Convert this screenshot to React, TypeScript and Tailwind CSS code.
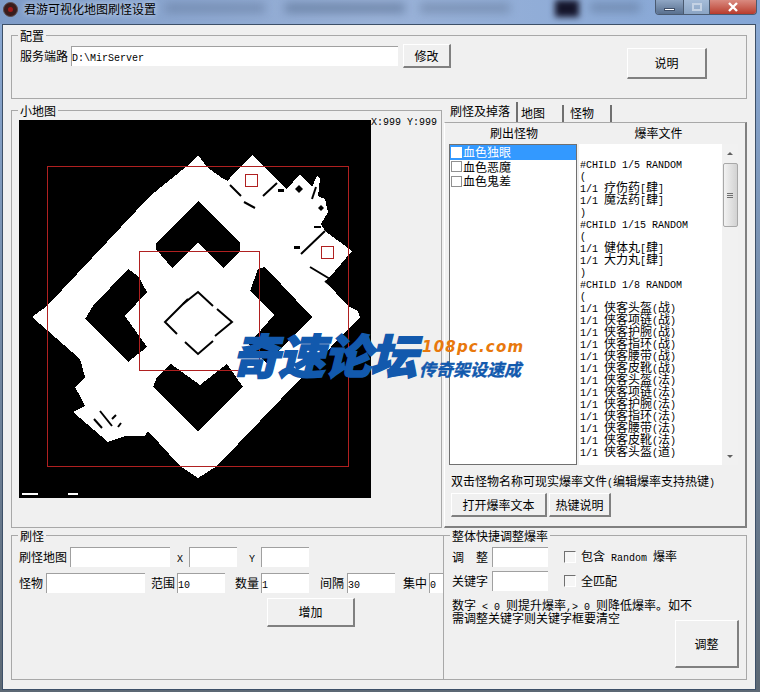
const cjk = "font-['Noto_Sans_CJK_SC','Liberation_Sans',sans-serif]";

// ascii runs are 6px wide like the bitmap font, cjk runs 12px
function T({ s }: { s: string }) {
  const parts = s.match(/[\x20-\x7e]+|[^\x20-\x7e]+/g) || [];
  return (
    <>
      {parts.map((p, i) =>
        /^[\x20-\x7e]/.test(p) ? (
          <span key={i} className="font-['Liberation_Mono',monospace] text-[10px] whitespace-pre">
            {p}
          </span>
        ) : (
          <span key={i} className="font-['Noto_Sans_CJK_SC',sans-serif] text-[12px]">
            {p}
          </span>
        )
      )}
    </>
  );
}

const Field = ({ value, className }: { value?: string; className: string }) => (
  <div
    className={`h-[20px] shrink-0 bg-white border-t border-l border-t-[#a0a0a0] border-l-[#a0a0a0] leading-[18px] whitespace-pre overflow-hidden ${className}`}
  >
    {value && <T s={value} />}
  </div>
);

const Btn = ({ label, className }: { label: string; className: string }) => (
  <div
    className={`shrink-0 flex items-center justify-center bg-[#f0f0f0] border-t border-l border-t-white border-l-white border-r-2 border-b-2 border-r-[#808080] border-b-[#808080] leading-none ${className}`}
  >
    <T s={label} />
  </div>
);

const Label = ({ s, className = '' }: { s: string; className?: string }) => (
  <div className={`shrink-0 leading-[20px] whitespace-pre ${className}`}>
    <T s={s} />
  </div>
);

const Group = ({ title, className, children }: { title: string; className: string; children: React.ReactNode }) => (
  <div className={`relative border border-[#a8a8a8] ${className}`}>
    <div className="absolute -top-[7px] left-[6px] h-[14px] px-[2px] bg-[#f0f0f0] leading-[14px]">
      <T s={title} />
    </div>
    {children}
  </div>
);

const Check = () => (
  <div className="w-[12px] h-[12px] shrink-0 bg-[#f6f6f6] border-t border-l border-t-[#707070] border-l-[#707070] border-r border-b border-r-white border-b-white" />
);

const monsters = ['血色独眼', '血色恶魔', '血色鬼差'];
const slots = ['头盔', '项链', '护腕', '指环', '腰带', '皮靴'];
const rates = [
  ' ',
  '#CHILD 1/5 RANDOM',
  '(',
  '1/1 疗伤药[肆]',
  '1/1 魔法药[肆]',
  ')',
  '#CHILD 1/15 RANDOM',
  '(',
  '1/1 健体丸[肆]',
  '1/1 大力丸[肆]',
  ')',
  '#CHILD 1/8 RANDOM',
  '(',
  ...slots.map((n) => `1/1 侠客${n}(战)`),
  ...slots.map((n) => `1/1 侠客${n}(法)`),
  '1/1 侠客头盔(道)',
];

const MiniMap = () => (
  <svg viewBox="19 121 352 378" className="w-[352px] h-[378px] shrink-0 bg-black block">
    <g shapeRendering="crispEdges">
      <polygon
        fill="#fff"
        points="198,156 207,168 222,179 228,182 232,176 252,156 278,182 287,190 300,175 312,188 317,177 320,180 318,197 325,200 328,213 321,225 325,232 352,252 330,278 325,282 348,307 358,312 360,318 303,377 217,467 198,479 180,467 148,432 145,437 125,437 108,443 73,413 85,407 80,397 75,388 85,378 80,360 32,318 47,307 107,243 150,197 187,167"
      />
      <polygon fill="#000" points="198,202 240,244 240,252 223,269 198,244 172,269 156,250 156,244" />
      <polygon fill="#000" points="265,268 312,318 266,364 249,345 274,316 250,292 258,270" />
      <polygon fill="#000" points="128,270 138,277 147,293 125,317 147,348 128,363 85,320 93,307" />
      <polygon fill="#000" points="171,365 157,378 153,388 198,432 243,388 227,365 200,386" />
    </g>
    <g fill="none" stroke="#000" strokeWidth="2">
      <path d="M183 305 198 293 213 307" />
      <path d="M188 300 165 323 177 335" />
      <path d="M217 310 232 323 215 337" />
      <path d="M185 343 198 355 213 342" />
      <path d="M230 186 241 197M244 203 255 209M263 197 277 184" />
      <path d="M301 255 325 232M310 268 330 280M325 282 335 290" />
      <path d="M94 420 102 429M100 412 112 427M112 420 116 416M118 428 121 424" />
      <path d="M312 200 316 188" />
    </g>
    <g fill="#000">
      <polygon points="299,186 303,190 299,194 295,190" />
      <polygon points="321,206 324,209 321,212 318,209" />
      <rect x="278" y="190" width="6" height="3" />
      <rect x="294" y="247" width="6" height="3" />
      <rect x="314" y="227" width="7" height="2" />
    </g>
    <g fill="none" stroke="#b02020" shapeRendering="crispEdges">
      <rect x="47.5" y="167.5" width="301" height="300" />
      <rect x="139.5" y="252.5" width="120" height="119" />
      <rect x="245.5" y="175.5" width="12" height="12" />
      <rect x="321.5" y="247.5" width="12" height="12" />
    </g>
    <rect x="22" y="494" width="16" height="2" fill="#fff" />
    <rect x="68" y="494" width="10" height="2" fill="#fff" />
  </svg>
);

const Scrollbar = () => (
  <div className="w-[16px] shrink-0 flex flex-col items-center bg-[#f1f1f1]">
    <div className="h-[19px] w-full flex items-center justify-center">
      <div className="w-0 h-0 border-x-[3px] border-x-transparent border-b-[3px] border-b-[#606060]" />
    </div>
    <div className="w-[15px] h-[64px] rounded-[2px] border border-[#a8a8a8] bg-gradient-to-r from-[#f2f2f2] to-[#d2d2d2] flex flex-col items-center justify-center gap-[1px]">
      <div className="w-[6px] h-[1px] bg-[#707070]" />
      <div className="w-[6px] h-[1px] bg-[#707070]" />
      <div className="w-[6px] h-[1px] bg-[#707070]" />
    </div>
    <div className="flex-1" />
    <div className="h-[18px] w-full flex items-center justify-center">
      <div className="w-0 h-0 border-x-[3px] border-x-transparent border-t-[3px] border-t-[#606060]" />
    </div>
  </div>
);

const DropPanel = () => (
  <div className="flex-1 flex flex-col">
    {/* tabs */}
    <div className="h-[18px] flex items-end pl-[3px] -mt-[18px]">
      <div className="w-[71px] h-[20px] bg-[#f0f0f0] border-r-2 border-r-[#707070] pl-[3px] leading-[18px] relative z-10">
        <T s="刷怪及掉落" />
      </div>
      <div className="w-[46px] h-[17px] border-r-2 border-r-[#707070] pl-[3px] leading-[16px]">
        <T s="地图" />
      </div>
      <div className="w-[48px] h-[17px] border-r-2 border-r-[#707070] pl-[6px] leading-[16px]">
        <T s="怪物" />
      </div>
    </div>
    <div className="flex-1 border-t border-l border-t-[#a8a8a8] border-l-white border-r-2 border-b-2 border-r-[#808080] border-b-[#808080] pl-[4px] flex flex-col">
      <div className="h-[21px] flex leading-[20px]">
        <div className="w-[130px] text-center">
          <T s="刷出怪物" />
        </div>
        <div className="w-[159px] text-center">
          <T s="爆率文件" />
        </div>
      </div>
      <div className="h-[321px] flex gap-[2px]">
        <div className="w-[128px] bg-white border border-[#707070]">
          {monsters.map((m, i) => (
            <div
              key={m}
              className={`h-[14.5px] flex items-center gap-[1px] pl-[1px] leading-none ${i === 0 ? 'bg-[#3399ff] text-white' : ''}`}
            >
              <div className={`w-[11px] h-[11px] border ${i === 0 ? 'bg-white border-white' : 'border-[#909090]'}`} />
              <T s={m} />
            </div>
          ))}
        </div>
        <div className="w-[159px] bg-white flex">
          <div className="flex-1 pl-[1px] pt-[1px] overflow-hidden">
            {rates.map((line, i) => (
              <div key={i} className="h-[12px] leading-[12px] whitespace-pre">
                <T s={line} />
              </div>
            ))}
          </div>
          <Scrollbar />
        </div>
      </div>
      <div className="mt-[9px] pl-[2px] h-[14px] leading-[14px] whitespace-pre">
        <T s="双击怪物名称可现实爆率文件(编辑爆率支持热键)" />
      </div>
      <div className="mt-[5px] pl-[2px] flex gap-[2px]">
        <Btn label="打开爆率文本" className="w-[96px] h-[24px]" />
        <Btn label="热键说明" className="w-[62px] h-[24px]" />
      </div>
    </div>
  </div>
);

export default function App() {
  return (
    <div className={`relative w-[760px] h-[692px] overflow-hidden bg-[#8aa9d4] text-black text-[12px] ${cjk}`}>
      {/* blurred desktop behind the title bar */}
      <div className="absolute inset-x-0 top-0 h-[25px] bg-gradient-to-r from-[#7f9cc8] via-[#9ab2d8] to-[#84a6d6]" />
      <div className="absolute left-[165px] top-[3px] w-[100px] h-[10px] bg-[#6d84a8] blur-[5px] opacity-70" />
      <div className="absolute left-[285px] top-[3px] w-[120px] h-[10px] bg-[#5f7698] blur-[5px] opacity-70" />
      <div className="absolute left-[420px] top-[3px] w-[90px] h-[10px] bg-[#6a7f9f] blur-[5px] opacity-60" />
      <div className="absolute left-[555px] top-0 w-[24px] h-[17px] bg-[#14142a] blur-[3px]" />
      <div className="absolute left-[590px] top-[3px] w-[50px] h-[9px] bg-[#5f7698] blur-[5px] opacity-60" />

      <div className="relative h-[692px] flex flex-col">
        {/* title bar */}
        <div className="h-[24px] shrink-0 flex items-start">
          <div className="mt-[2px] ml-[3px] w-[15px] h-[15px] rounded-full bg-[#3a1c1c] border border-[#5a4a4a] flex items-center justify-center">
            <div className="w-[5px] h-[5px] rounded-full bg-[#a01818]" />
          </div>
          <div className="ml-[6px] mt-[2px] leading-[14px] [text-shadow:0_0_6px_#e8f0fa]">
            <T s="君游可视化地图刷怪设置" />
          </div>
          <div className="flex-1" />
          {/* window buttons */}
          <div className="mr-[3px] h-[15px] flex border border-t-0 border-[#4a5a70] rounded-b-[4px] overflow-hidden">
            <div className="w-[28px] flex items-center justify-center bg-gradient-to-b from-[#8fa6c4] to-[#59708f] border-r border-[#4a5a70]">
              <div className="mt-[4px] w-[11px] h-[3px] bg-white border border-[#40506a]" />
            </div>
            <div className="w-[26px] flex items-center justify-center bg-gradient-to-b from-[#a5bcd8] to-[#8aa4c4] border-r border-[#4a5a70]">
              <div className="w-[10px] h-[8px] border-2 border-[#c4d2e4]" />
            </div>
            <div className="w-[46px] flex items-center justify-center bg-gradient-to-b from-[#d98a80] to-[#b83a2c]">
              <svg width="12" height="10" viewBox="0 0 12 10">
                <path d="M2 1 10 9M10 1 2 9" stroke="#fff" strokeWidth="2.4" />
              </svg>
            </div>
          </div>
        </div>

        {/* client area */}
        <div className="flex-1 bg-gradient-to-b from-[#8aa9d4] to-[#5c6874]">
          <div className="ml-[2px] mr-[4px] h-[666px] bg-[#f0f0f0] border border-[#3d5068] pl-[8px] pr-[8px] pt-[10px] flex flex-col">
            <Group title="配置" className="h-[64px] shrink-0 pl-[8px] pt-[10px] flex items-start">
              <Label s="服务端路" className="w-[51px]" />
              <Field value="D:\MirServer" className="w-[327px]" />
              <Btn label="修改" className="ml-[5px] -mt-[2px] w-[48px] h-[24px]" />
              <Btn label="说明" className="ml-[176px] mt-[2px] w-[80px] h-[31px]" />
            </Group>

            <div className="mt-[11px] h-[418px] shrink-0 flex">
              <Group title="小地图" className="w-[431px] shrink-0 pl-[7px] pt-[9px] flex items-start">
                <MiniMap />
                <div className="-mt-[6px] leading-[12px] whitespace-pre relative">
                  <T s="X:999 Y:999" />
                </div>
              </Group>
              <div className="ml-[2px] flex-1 pt-[12px] flex flex-col">
                <DropPanel />
              </div>
            </div>

            <div className="mt-[7px] h-[145px] shrink-0 flex">
              <Group title="刷怪" className="w-[433px] shrink-0 pl-[7px] pt-[11px]">
                <div className="flex h-[20px]">
                  <Label s="刷怪地图" className="w-[51px]" />
                  <Field className="w-[100px]" />
                  <Label s="X" className="ml-[7px] w-[12px]" />
                  <Field className="w-[48px]" />
                  <Label s="Y" className="ml-[12px] w-[12px]" />
                  <Field className="w-[48px]" />
                </div>
                <div className="mt-[6px] flex h-[20px]">
                  <Label s="怪物" className="w-[27px]" />
                  <Field className="w-[99px]" />
                  <Label s="范围" className="ml-[6px] w-[26px]" />
                  <Field value="10" className="w-[48px]" />
                  <Label s="数量" className="ml-[10px] w-[26px]" />
                  <Field value="1" className="w-[48px]" />
                  <Label s="间隔" className="ml-[11px] w-[27px]" />
                  <Field value="30" className="w-[48px]" />
                  <Label s="集中" className="ml-[8px] w-[26px]" />
                  <Field value="0" className="w-[14px]" />
                </div>
                <Btn label="增加" className="mt-[5px] ml-[248px] w-[88px] h-[29px]" />
              </Group>

              <Group title="整体快捷调整爆率" className="flex-1 -ml-px pl-[8px] pt-[11px]">
                <div className="flex h-[20px] items-center">
                  <Label s="调　整" className="w-[40px]" />
                  <Field className="w-[56px]" />
                  <div className="ml-[16px]">
                    <Check />
                  </div>
                  <Label s="包含 Random 爆率" className="ml-[5px]" />
                </div>
                <div className="mt-[4px] flex h-[20px] items-center">
                  <Label s="关键字" className="w-[40px]" />
                  <Field className="w-[56px]" />
                  <div className="ml-[16px]">
                    <Check />
                  </div>
                  <Label s="全匹配" className="ml-[5px]" />
                </div>
                <div className="mt-[7px] leading-[13px] whitespace-pre">
                  <div className="h-[13px]">
                    <T s="数字 < 0 则提升爆率,> 0 则降低爆率。如不" />
                  </div>
                  <div className="h-[13px]">
                    <T s="需调整关键字则关键字框要清空" />
                  </div>
                </div>
                <Btn label="调整" className="-mt-[4px] ml-[223px] w-[64px] h-[48px]" />
              </Group>
            </div>
          </div>
        </div>
      </div>

      {/* forum watermark */}
      <div className="absolute left-[232px] top-[326px] flex items-start">
        <div className="h-[56px] leading-[56px] text-[47px] font-black italic tracking-[-1px] text-[#1259ad] [-webkit-text-stroke:1.5px_#1259ad] whitespace-pre font-['Noto_Sans_CJK_SC',sans-serif]">
          奇速论坛
        </div>
        <div className="ml-[3px] mt-[13px] flex flex-col items-start">
          <div className="ml-[3px] h-[16px] leading-[16px] text-[15px] font-bold italic text-[#e8780c] font-['DejaVu_Sans',sans-serif] tracking-[1.2px]">
            108pc.com
          </div>
          <div className="mt-[5px] h-[18px] leading-[18px] text-[17px] font-bold italic text-[#1259ad] [-webkit-text-stroke:0.4px_#1259ad] whitespace-pre font-['Noto_Sans_CJK_SC',sans-serif]">
            传奇架设速成
          </div>
        </div>
      </div>
    </div>
  );
}
